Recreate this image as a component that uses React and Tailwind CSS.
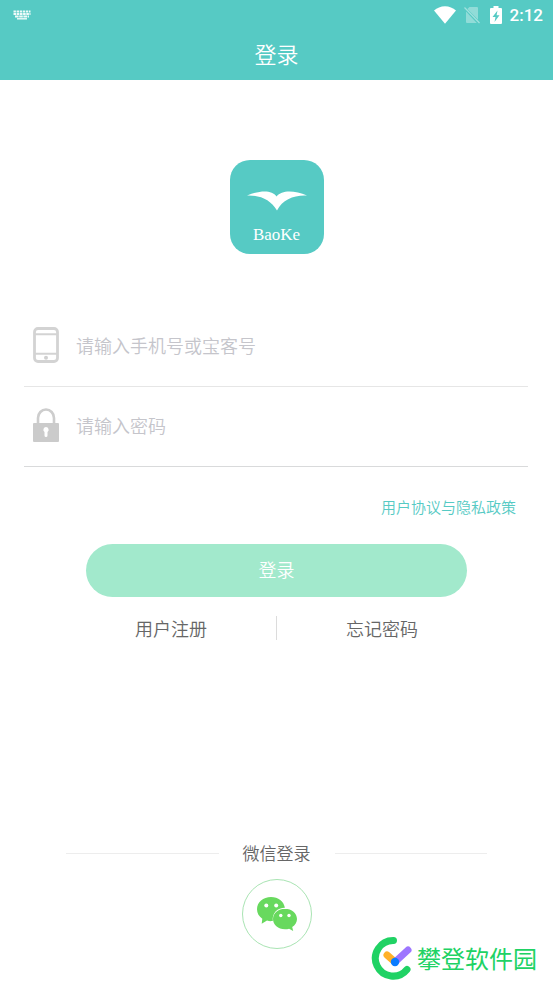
function StatusBar() {
  return (
    <div className="flex h-[30px] items-center justify-between pr-[10px] pl-[13px]">
      <svg className="h-[11px] w-[18px]" viewBox="0 0 18 11" aria-hidden="true">
        <g stroke="#fff" strokeOpacity="0.9" strokeWidth="1.8" fill="none">
          <path d="M.5 1.500h17" strokeDasharray="2.400 0.700" />
          <path d="M.5 4h17" strokeDasharray="2.600 0.600" />
          <path d="M2 6.500h14" strokeDasharray="3.600 0.600" />
          <path d="M4 8.800h10" strokeWidth="1.400" />
        </g>
      </svg>
      <div className="flex items-center text-white">
        <svg className="h-[18px] w-[22px]" viewBox="0 0 22 18" aria-hidden="true">
          <path d="M0 4.600C3 1.900 6.800.3 11 .3s8 1.600 11 4.300L11 17.800z" fill="#fff" />
        </svg>
        <svg className="ml-2 h-[18px] w-4" viewBox="0 0 16 18" aria-hidden="true">
          <path d="M5.500 1H13q1 0 1 1v11.700L3.400 3.100zM2 5.500 12.800 17H3q-1 0-1-1z" fill="#fff" fillOpacity="0.35" />
          <path d="M.5 1.500 15.500 17" stroke="#fff" strokeOpacity="0.45" strokeWidth="1.200" />
        </svg>
        <svg className="ml-[10px] h-[18px] w-3" viewBox="0 0 12 18" aria-hidden="true">
          <path d="M3.500 0h5v2H11q1 0 1 1v14q0 1-1 1H1q-1 0-1-1V3q0-1 1-1h2.500z" fill="#fff" />
          <path d="M7.500 4.500 2.500 11H5.500L4.500 16 9.500 9.200H6.600z" fill="#56cac4" />
        </svg>
        <span className="ml-2 font-[Roboto,sans-serif] text-[17px] font-medium leading-5">2:12</span>
      </div>
    </div>
  );
}

function Logo() {
  return (
    <div className="flex h-[94px] w-[94px] flex-col items-center rounded-[20px] bg-[#56cac4] pt-[31px] text-white">
      <svg className="h-5 w-[60px] shrink-0" viewBox="0 0 60 20" aria-hidden="true">
        <path
          d="M0 4.500C12-.5 25-1.500 29.500 5.500 35-1.500 48-.5 60 4.500 47 3.800 35.500 8.500 30 19.500 24 9 13 4 0 4.500z"
          fill="#fff"
        />
      </svg>
      <span className="mt-3 font-['Liberation_Serif',serif] text-[17px] font-normal leading-6">BaoKe</span>
    </div>
  );
}

function PhoneIcon() {
  return (
    <svg className="h-9 w-[26px]" viewBox="0 0 26 36" fill="none" stroke="#d3d3d3" aria-hidden="true">
      <rect x="1.500" y="1.500" width="23" height="33" rx="3.500" strokeWidth="2.800" />
      <path d="M2 7.200h22M2 26.800h22" strokeWidth="2" />
      <circle cx="13" cy="30.800" r="2" fill="#d0d0d0" stroke="none" />
    </svg>
  );
}

function LockIcon() {
  return (
    <svg className="h-9 w-[26px]" viewBox="0 0 26 36" aria-hidden="true">
      <path d="M5 17V11a8 8.500 0 0 1 16 0v6" fill="none" stroke="#cdcdcd" strokeWidth="2.600" />
      <rect y="16" width="26" height="19" rx="1" fill="#cbcbcb" />
      <path d="M13 20a2.700 2.700 0 0 1 1.500 4.900V28.500a1.500 1.500 0 0 1-3 0V24.900A2.700 2.700 0 0 1 13 20z" fill="#fff" />
    </svg>
  );
}

function Field({ id, label, type, icon, border }) {
  return (
    <div className={`flex h-20 items-center gap-[17px] border-b pb-1 pl-[9px] ${border}`}>
      <label htmlFor={id} aria-label={label} className="shrink-0">{icon}</label>
      <input
        id={id}
        type={type}
        placeholder={label}
        className="h-10 min-w-0 flex-1 bg-transparent text-lg leading-10 text-[#666] outline-none placeholder:text-[#c5c5cb]"
      />
    </div>
  );
}

function WeChatIcon() {
  return (
    <svg className="h-[34px] w-[40px]" viewBox="0 0 40 34" aria-hidden="true">
      <path
        d="M14 0C6.200 0 0 5.200 0 12.200c0 4 2 7.200 5.300 9.500L4.700 26.800 10 23.600c1.500.4 3 .6 4.500.5h1.300C15 15.500 20.500 10.800 27.900 10.700 26.800 4.300 21.300 0 14 0z"
        fill="#68d95e"
      />
      <path
        d="M28 11.800c-6.900 0-12 4.500-12 10.200s5.100 10.300 12 10.300c1.400 0 2.800-.2 4.100-.6l4.100 2.200-1-3.900c3-1.900 4.800-4.700 4.800-8 0-5.700-5.200-10.200-12-10.200z"
        fill="#68d95e"
      />
      <g fill="#fff">
        <circle cx="9.300" cy="8.500" r="2" />
        <circle cx="19.200" cy="8.500" r="2" />
        <circle cx="23.800" cy="18.500" r="1.700" />
        <circle cx="32" cy="18.500" r="1.700" />
      </g>
    </svg>
  );
}

function SiteMark() {
  return (
    <div className="absolute right-4 bottom-[3px] flex items-center gap-1">
      <svg className="h-[44px] w-[42px]" viewBox="0 0 42 44" fill="none" strokeLinecap="round" aria-hidden="true">
        <path d="M22.500 4.500A17.800 17.800 0 1 0 36 33.500" stroke="#20d264" strokeWidth="7" />
        <path d="M16 19 24 26" stroke="#ffb128" strokeWidth="7" />
        <path d="M24 26 37 14" stroke="#9d76ff" strokeWidth="7" />
        <circle cx="24" cy="26" r="4.200" fill="#0b7cff" />
      </svg>
      <span className="text-2xl leading-9 font-normal text-[#20d264]">攀登软件园</span>
    </div>
  );
}

export default function App() {
  return (
    <div className="relative flex min-h-screen flex-col bg-white font-['Noto_Sans_CJK_SC',sans-serif] font-[350] text-[#666]">
      <header className="bg-[#56cac4] text-white">
        <StatusBar />
        <h1 className="h-[50px] text-center text-[22px] leading-[46px] font-[350]">登录</h1>
      </header>

      <main className="flex flex-1 flex-col">
        <div className="flex justify-center pt-20">
          <Logo />
        </div>

        <form className="pt-[53px] pr-[25px] pl-6" onSubmit={(e) => e.preventDefault()}>
          <Field id="account" label="请输入手机号或宝客号" type="text" icon={<PhoneIcon />} border="border-[#e6e6e6]" />
          <Field id="password" label="请输入密码" type="password" icon={<LockIcon />} border="border-[#d9dadb]" />

          <div className="flex justify-end pt-7 pr-3">
            <a href="#terms" className="text-[15px] leading-6 text-[#56cac4]">用户协议与隐私政策</a>
          </div>

          <div className="pt-[25px] pr-[61px] pl-[62px]">
            <button type="submit" className="h-[53px] w-full rounded-full bg-[#a2e9cc] pb-[3px] text-lg text-white">登录</button>
          </div>
        </form>

        <nav className="flex items-center px-[66px] pt-[19px] text-lg leading-6">
          <a href="#register" className="flex-1 text-center">用户注册</a>
          <span className="h-6 w-px bg-[#dcdcdc]" />
          <a href="#forgot" className="flex-1 text-center">忘记密码</a>
        </nav>

        <section className="mt-auto flex flex-col items-center px-[66px] pb-[34px]">
          <div className="flex w-full items-center gap-6">
            <span className="h-px flex-1 bg-[#ededed]" />
            <h2 className="text-[17px] leading-6 font-[350]">微信登录</h2>
            <span className="h-px flex-1 bg-[#ededed]" />
          </div>
          <button
            type="button"
            aria-label="微信登录"
            className="mt-[14px] flex h-[70px] w-[70px] items-center justify-center rounded-full border border-[#a9e4b3]"
          >
            <WeChatIcon />
          </button>
        </section>
      </main>

      <SiteMark />
    </div>
  );
}
